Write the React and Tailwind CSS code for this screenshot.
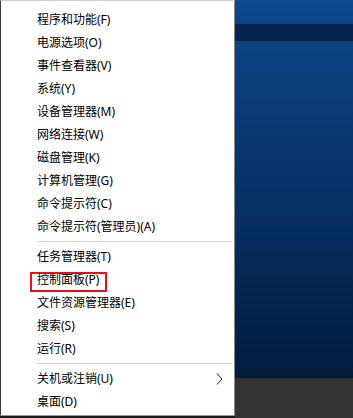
import React from 'react';

const groupA = [
  '程序和功能(F)',
  '电源选项(O)',
  '事件查看器(V)',
  '系统(Y)',
  '设备管理器(M)',
  '网络连接(W)',
  '磁盘管理(K)',
  '计算机管理(G)',
  '命令提示符(C)',
  '命令提示符(管理员)(A)',
];

const groupB = ['任务管理器(T)', '控制面板(P)', '文件资源管理器(E)', '搜索(S)', '运行(R)'];

const Row = ({ label, boxed, sub }) => (
  <div className="relative flex items-center h-[23px] pl-[36px] pr-[11px] text-[12px] text-black">
    {boxed && (
      <span className="absolute left-[29px] top-[4px] w-[77px] h-[20px] border-2 border-[#e8101a]" />
    )}
    <span className="relative">{label}</span>
    {sub && (
      <svg className="ml-auto" width="7" height="12" viewBox="0 0 7 12">
        <path d="M1 0.5 L6 6 L1 11.5" fill="none" stroke="#222" strokeWidth="1" />
      </svg>
    )}
  </div>
);

const Separator = () => (
  <div className="h-[7px] flex items-center pl-[36px] pr-[2px]">
    <div className="h-px w-full bg-[#d4d4d4]" />
  </div>
);

export default function App() {
  return (
    <div
      className="flex w-[353px] h-[418px] overflow-hidden bg-[#1a1a1a]"
      style={{ fontFamily: '"Noto Sans", "Noto Sans CJK SC", sans-serif' }}
    >
      {/* context menu */}
      <div className="w-[235px] h-[416px] bg-white border-l border-l-[#3c3c3c] border-r border-r-[#8a8a8a] border-b border-b-[#9a9a9a] border-t border-t-[#d0d0d0] pt-[7px] flex flex-col shrink-0">
        {groupA.map((l) => (
          <Row key={l} label={l} />
        ))}
        <Separator />
        {groupB.map((l) => (
          <Row key={l} label={l} boxed={l === '控制面板(P)'} />
        ))}
        <Separator />
        <Row label="关机或注销(U)" sub />
        <Row label="桌面(D)" />
      </div>

      {/* desktop */}
      <div className="flex-1 flex flex-col">
        <div className="h-[24px] bg-gradient-to-b from-[#0d4a8e] to-[#0b4484]" />
        <div className="h-[17px] bg-[#06244e]" />
        <div className="flex-1 bg-gradient-to-b from-[#0b4382] via-[#073065] to-[#021b3c]" />
        <div className="h-[40px] bg-[#333333]" />
      </div>
    </div>
  );
}
